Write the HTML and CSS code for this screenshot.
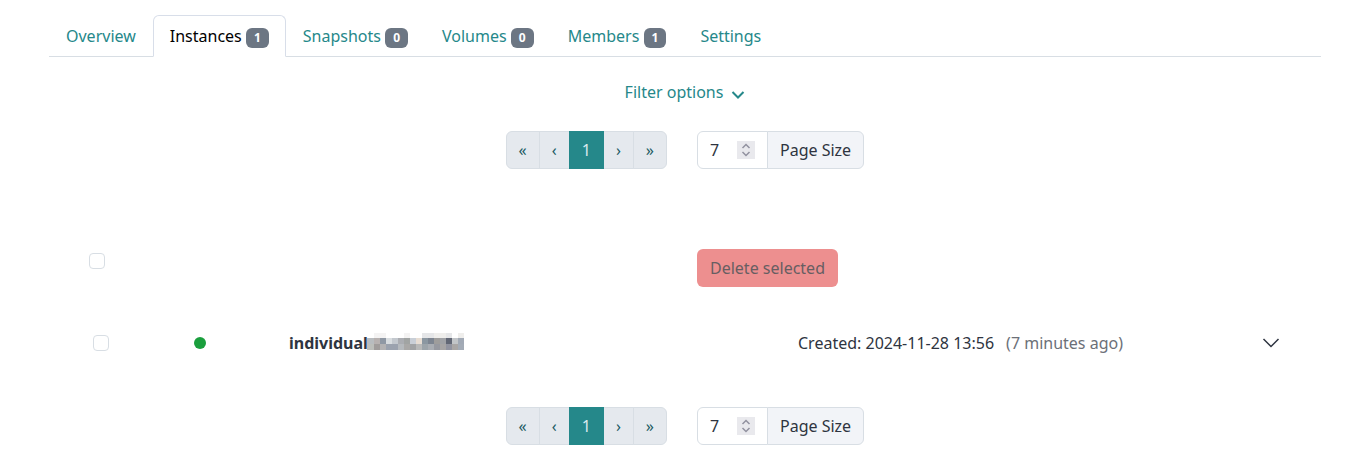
FILE: index.html
```html
<!DOCTYPE html>
<html lang="en">
<head>
<meta charset="utf-8">
<meta name="viewport" content="width=device-width, initial-scale=1">
<title>Instances</title>
<link rel="stylesheet" href="styles.css">
</head>
<body>
<main class="container">
  <nav>
    <ul class="tabs">
      <li><a class="tab" href="#overview">Overview</a></li>
      <li><a class="tab active" href="#instances" aria-current="page">Instances <span class="badge">1</span></a></li>
      <li><a class="tab" href="#snapshots">Snapshots <span class="badge">0</span></a></li>
      <li><a class="tab" href="#volumes">Volumes <span class="badge">0</span></a></li>
      <li><a class="tab" href="#members">Members <span class="badge">1</span></a></li>
      <li><a class="tab" href="#settings">Settings</a></li>
    </ul>
  </nav>

  <button class="filter" type="button">Filter options
    <svg class="filter-icon" viewBox="0 0 14 14" aria-hidden="true"><path d="M1.5 5 7 10.5 12.5 5"/></svg>
  </button>

  <div class="pager">
    <ul class="pages">
      <li><a class="page" href="#first">«</a></li>
      <li><a class="page" href="#prev">‹</a></li>
      <li><a class="page current" href="#1" aria-current="page">1</a></li>
      <li><a class="page" href="#next">›</a></li>
      <li><a class="page" href="#last">»</a></li>
    </ul>
    <div class="size">
      <span class="number">
        <input class="size-input" id="size-top" type="number" value="7">
        <svg class="spinner" viewBox="0 0 18 18" aria-hidden="true"><path d="M5.5 7 9 3.5 12.5 7M5.5 11 9 14.5 12.5 11"/></svg>
      </span>
      <label class="size-label" for="size-top">Page Size</label>
    </div>
  </div>

  <div class="bulk">
    <input class="check" type="checkbox" aria-label="Select all">
    <button class="delete" type="button" disabled>Delete selected</button>
  </div>

  <div class="instance">
    <input class="check" type="checkbox" aria-label="Select instance">
    <span class="status"></span>
    <span class="name">individual<svg class="mosaic" viewBox="0 0 97 17" shape-rendering="crispEdges" aria-hidden="true">
      <path fill="#b8bcbf" d="M0 5h7v6H0z"/><path fill="#b7b1b0" d="M7 5h6v6H7z"/><path fill="#8f98a4" d="M13 5h6v6h-6z"/><path fill="#d9dde0" d="M19 5h6v6h-6z"/><path fill="#c3c8ce" d="M25 5h6v6h-6z"/><path fill="#abadb2" d="M31 5h6v6h-6z"/><path fill="#a1a4a3" d="M37 5h6v6h-6z"/><path fill="#c9cfd7" d="M43 5h6v6h-6z"/><path fill="#e7ddd3" d="M49 5h6v6h-6z"/><path fill="#8b97a1" d="M55 5h6v6h-6z"/><path fill="#7d8591" d="M61 5h6v6h-6z"/><path fill="#9e9d9c" d="M67 5h6v6h-6z"/><path fill="#a0a2a6" d="M73 5h6v6h-6z"/><path fill="#626775" d="M79 5h6v6h-6z"/><path fill="#c2c5c8" d="M85 5h6v6h-6z"/><path fill="#a1a9b5" d="M91 5h6v6h-6z"/>
      <path fill="#bcbeba" d="M0 11h7v6H0z"/><path fill="#a09c9b" d="M7 11h6v6H7z"/><path fill="#b3b2b3" d="M13 11h6v6h-6z"/><path fill="#9ba2ae" d="M19 11h12v6H19z"/><path fill="#b5b9bd" d="M31 11h6v6h-6z"/><path fill="#a9a8a7" d="M37 11h6v6h-6z"/><path fill="#a1a3a5" d="M43 11h6v6h-6z"/><path fill="#b8b9b9" d="M49 11h6v6h-6z"/><path fill="#9ca4aa" d="M55 11h6v6h-6z"/><path fill="#a9adb3" d="M61 11h6v6h-6z"/><path fill="#9799a0" d="M67 11h6v6h-6z"/><path fill="#a7a5a5" d="M73 11h6v6h-6z"/><path fill="#9294a0" d="M79 11h6v6h-6z"/><path fill="#a9a6a5" d="M85 11h6v6h-6z"/><path fill="#a3abb6" d="M91 11h6v6h-6z"/>
      <path fill="#f4f3f3" d="M7 0h12v5H7zM37 0h6v5h-6z"/><path fill="#e5e6e8" d="M55 0h12v5H55zM79 0h6v5h-6z"/><path fill="#efeeec" d="M67 0h12v5H67zM91 0h6v5h-6z"/>
    </svg></span>
    <span class="created">Created: 2024-11-28 13:56 <small class="ago">(7 minutes ago)</small></span>
    <button class="expand" type="button" aria-label="Expand">
      <svg class="expand-icon" viewBox="0 0 18 18" aria-hidden="true"><path d="M1.5 5 9 12.5 16.5 5"/></svg>
    </button>
  </div>

  <div class="pager">
    <ul class="pages">
      <li><a class="page" href="#first">«</a></li>
      <li><a class="page" href="#prev">‹</a></li>
      <li><a class="page current" href="#1" aria-current="page">1</a></li>
      <li><a class="page" href="#next">›</a></li>
      <li><a class="page" href="#last">»</a></li>
    </ul>
    <div class="size">
      <span class="number">
        <input class="size-input" id="size-bottom" type="number" value="7">
        <svg class="spinner" viewBox="0 0 18 18" aria-hidden="true"><path d="M5.5 7 9 3.5 12.5 7M5.5 11 9 14.5 12.5 11"/></svg>
      </span>
      <label class="size-label" for="size-bottom">Page Size</label>
    </div>
  </div>
</main>
</body>
</html>
```
FILE: styles.css
```css
* {
  box-sizing: border-box;
}

body {
  margin: 0;
  background: #fff;
  color: #2e3440;
  font: 16px/24px "Noto Sans", sans-serif;
}

button,
input {
  margin: 0;
  color: inherit;
  font: inherit;
}

svg {
  fill: none;
}

.container {
  display: flex;
  flex-direction: column;
  margin: 0 43px 0 49px;
  padding: 15px 0 28px;
}

.tabs,
.pages {
  display: flex;
  margin: 0;
  padding: 0;
  list-style: none;
}

.tabs {
  border-bottom: 1px solid #d8dee4;
}

.tab {
  display: block;
  margin-bottom: -1px;
  padding: 8px 16px;
  border: 1px solid transparent;
  border-radius: 6px 6px 0 0;
  color: #25888a;
  text-decoration: none;
}

.tab.active {
  border-color: #d8dee9 #d8dee9 #fff;
  background: #fff;
  color: #000;
}

.badge {
  display: inline-block;
  padding: 4px 8px;
  border-radius: 6px;
  background: #6c7683;
  color: #fff;
  font-size: 12px;
  font-weight: 700;
  line-height: 12px;
  vertical-align: baseline;
}

.filter {
  display: flex;
  align-items: center;
  align-self: center;
  gap: 8px;
  margin-top: 16px;
  padding: 7px 0;
  border: 0;
  background: none;
  color: #25888a;
}

.filter-icon {
  width: 14px;
  height: 14px;
  margin-top: 4px;
  stroke: currentColor;
  stroke-width: 2;
}

.pager {
  display: grid;
  grid-template-columns: 1fr 1fr;
  margin-top: 20px;
}

.pages {
  justify-content: flex-end;
  padding-right: 18px;
}

.page {
  display: block;
  margin-left: -1px;
  padding: 6px 12px;
  border: 1px solid #d8dee4;
  background: #e5e9ee;
  color: #1b5a62;
  text-decoration: none;
}

.pages li:first-child .page {
  border-radius: 6px 0 0 6px;
}

.pages li:last-child .page {
  border-radius: 0 6px 6px 0;
}

.page.current {
  position: relative;
  border-color: #25888a;
  background: #25888a;
  color: #d8e9ee;
}

.size {
  display: flex;
  padding-left: 12px;
}

.number {
  position: relative;
  display: flex;
}

.size-input {
  width: 71px;
  padding: 6px 12px;
  border: 1px solid #d8dee4;
  border-radius: 6px 0 0 6px;
  background: #fff;
  appearance: textfield;
}

.size-input::-webkit-inner-spin-button {
  appearance: none;
}

.spinner {
  position: absolute;
  top: 10px;
  right: 13px;
  width: 18px;
  height: 18px;
  background: #e9e9ed;
  stroke: #9292a0;
  stroke-width: 1.5;
  pointer-events: none;
}

.size-label {
  margin-left: -1px;
  padding: 6px 12px;
  border: 1px solid #d8dee4;
  border-radius: 0 6px 6px 0;
  background: #f2f4f8;
}

.bulk {
  display: grid;
  grid-template-columns: 1fr 1fr;
  margin-top: 80px;
}

.bulk .check {
  margin: 4px 0 0 40px;
}

.check {
  width: 16px;
  height: 16px;
  border: 1px solid #d8dee4;
  border-radius: 4px;
  background: #fff;
  appearance: none;
}

.check:checked {
  background: #25888a;
}

.delete {
  justify-self: start;
  margin-left: 12px;
  padding: 7px 13px;
  border: 0;
  border-radius: 6px;
  background: #ed8f8f;
  color: #675e62;
}

.instance {
  display: grid;
  grid-template-columns: 101fr 95fr 509fr 464fr 18px;
  align-items: center;
  margin-top: 44px;
  padding: 0 41px 0 44px;
}

.status {
  width: 12px;
  height: 12px;
  border-radius: 50%;
  background: #1a9f3d;
}

.name {
  display: flex;
  align-items: center;
  font-weight: 700;
}

.mosaic {
  width: 97px;
  height: 17px;
  margin: 0 0 4px -1px;
}

.created {
  display: flex;
  gap: 12px;
}

.ago {
  color: #6c7078;
  font-size: 16px;
}

.expand {
  display: flex;
  padding: 0;
  border: 0;
  background: none;
}

.expand-icon {
  width: 18px;
  height: 18px;
  stroke: #2e3440;
  stroke-width: 1.5;
}

.instance + .pager {
  margin-top: 52px;
}
```
